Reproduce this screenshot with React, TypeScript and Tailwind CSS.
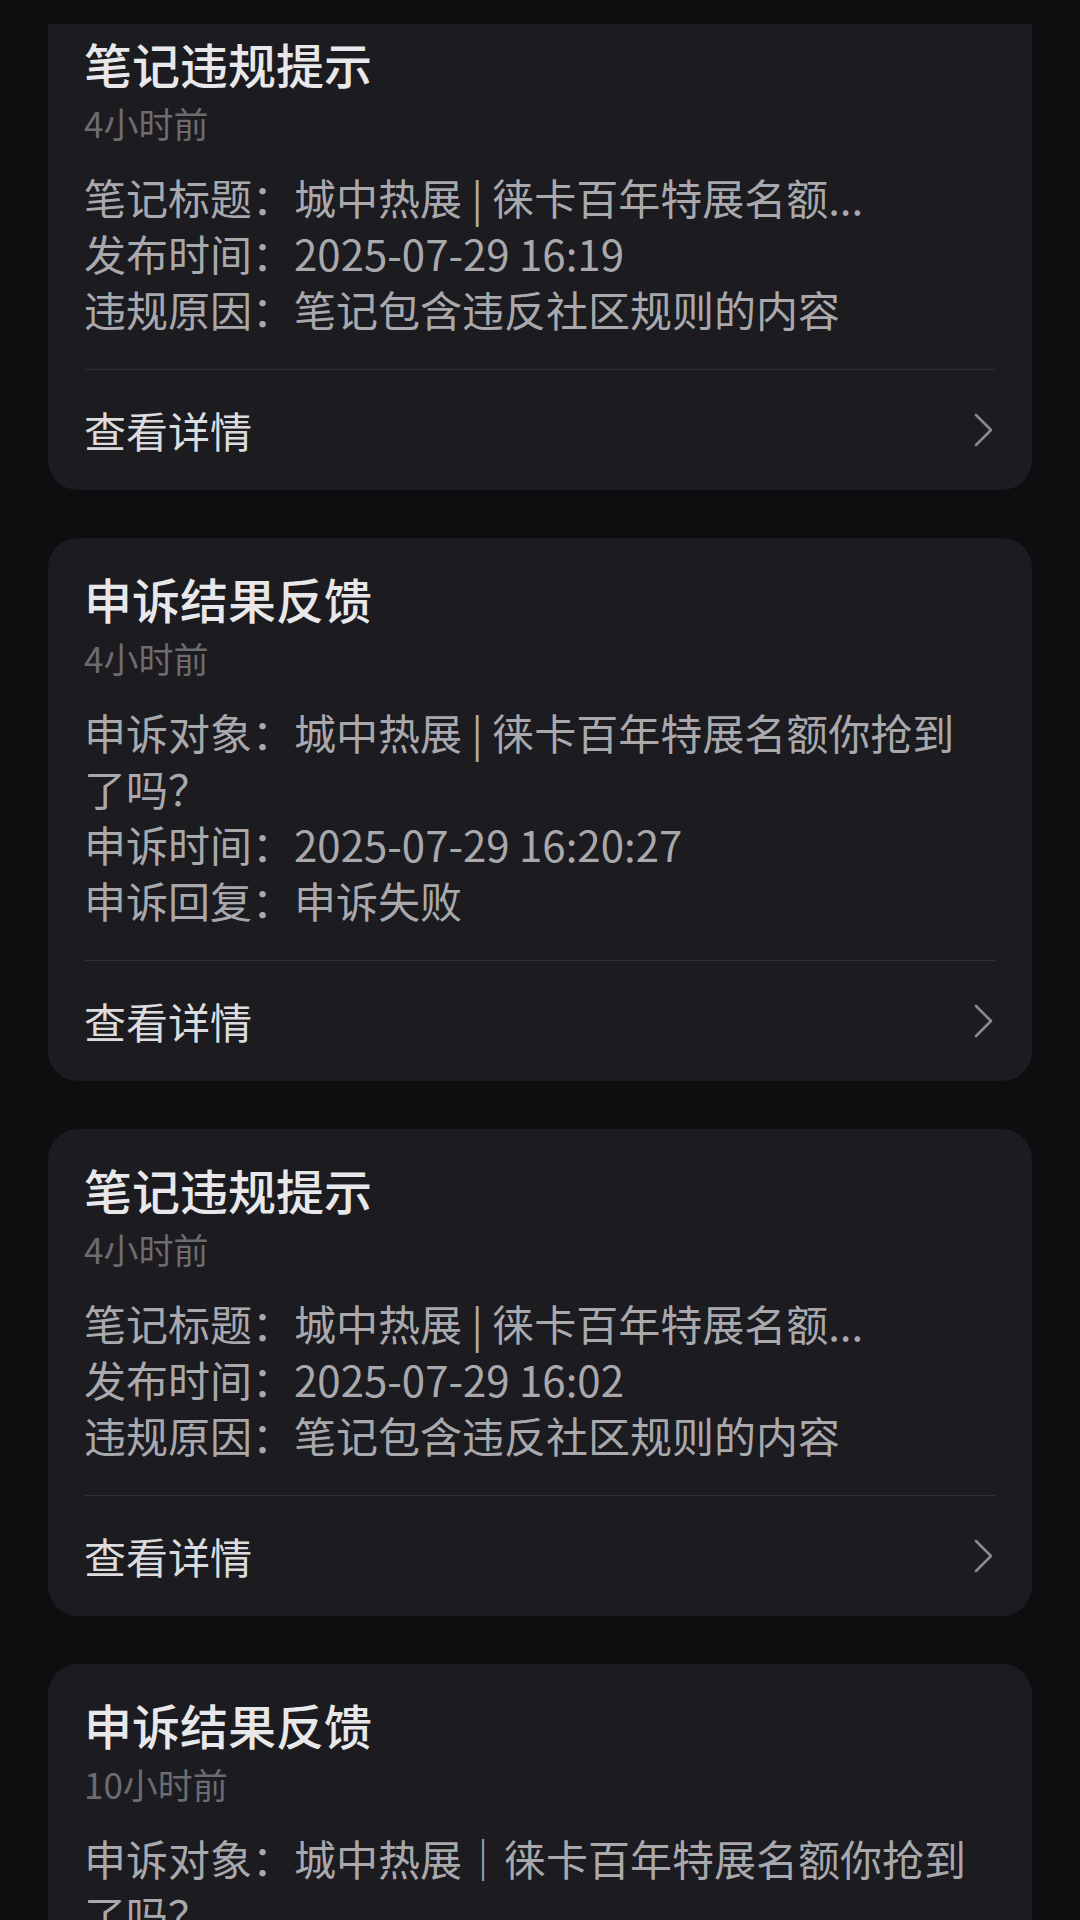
const font = { fontFamily: '"Noto Sans CJK SC", "Noto Sans", sans-serif' }

type Notice = {
  title: string
  time: string
  rows: string[][]
}

const notices: Notice[] = [
  {
    title: '笔记违规提示',
    time: '4小时前',
    rows: [
      ['笔记标题：', '城中热展 | 徕卡百年特展名额...'],
      ['发布时间：', '2025-07-29 16:19'],
      ['违规原因：', '笔记包含违反社区规则的内容'],
    ],
  },
  {
    title: '申诉结果反馈',
    time: '4小时前',
    rows: [
      ['申诉对象：', '城中热展 | 徕卡百年特展名额你抢到了吗？'],
      ['申诉时间：', '2025-07-29 16:20:27'],
      ['申诉回复：', '申诉失败'],
    ],
  },
  {
    title: '笔记违规提示',
    time: '4小时前',
    rows: [
      ['笔记标题：', '城中热展 | 徕卡百年特展名额...'],
      ['发布时间：', '2025-07-29 16:02'],
      ['违规原因：', '笔记包含违反社区规则的内容'],
    ],
  },
  {
    title: '申诉结果反馈',
    time: '10小时前',
    rows: [
      ['申诉对象：', '城中热展｜徕卡百年特展名额你抢到了吗？'],
      ['申诉时间：', '2025-07-29 10:12:44'],
      ['申诉回复：', '申诉失败'],
    ],
  },
]

function App() {
  return (
    <div className="h-screen overflow-hidden bg-[#0e0e11]" style={font}>
      <div className="mt-[24px] flex flex-col gap-[48px] px-[48px]">
        {notices.map((n, i) => (
          <Card key={i} notice={n} first={i === 0} />
        ))}
      </div>
    </div>
  )
}

export default App

const Card = ({ notice, first }: { notice: Notice; first: boolean }) => {
  return (
    <div className={`overflow-hidden bg-[#1b1b20] px-[36px] ${first ? 'rounded-b-[30px] rounded-t-[3px]' : 'rounded-[30px]'}`}>
      <div className={first ? 'pt-[11px]' : 'pt-[32px]'}>
        <h2 className="text-[48px] leading-[56px] font-medium text-[#e8e8ea]">{notice.title}</h2>
        <p className="mt-[10px] text-[35px] leading-[44px] text-[#6c6c70]">{notice.time}</p>
        <div className="mt-[24px] text-[42px] leading-[56px] text-[#a9a9ad]">
          {notice.rows.map((r, i) => (
            <p key={i}>
              {r[0]}
              {r[1]}
            </p>
          ))}
        </div>
      </div>
      <div className="mt-[32px] h-px bg-[#2e2e33]" />
      <div className="flex h-[120px] items-center justify-between">
        <span className="text-[42px] leading-[56px] text-[#dcdcde]">查看详情</span>
        <svg width="20" height="34" viewBox="0 0 20 34" fill="none" className="mr-[2px]">
          <polyline points="2,2 17,17 2,32" stroke="#8a8a8e" strokeWidth="2.6" strokeLinecap="round" strokeLinejoin="round" />
        </svg>
      </div>
    </div>
  )
}
